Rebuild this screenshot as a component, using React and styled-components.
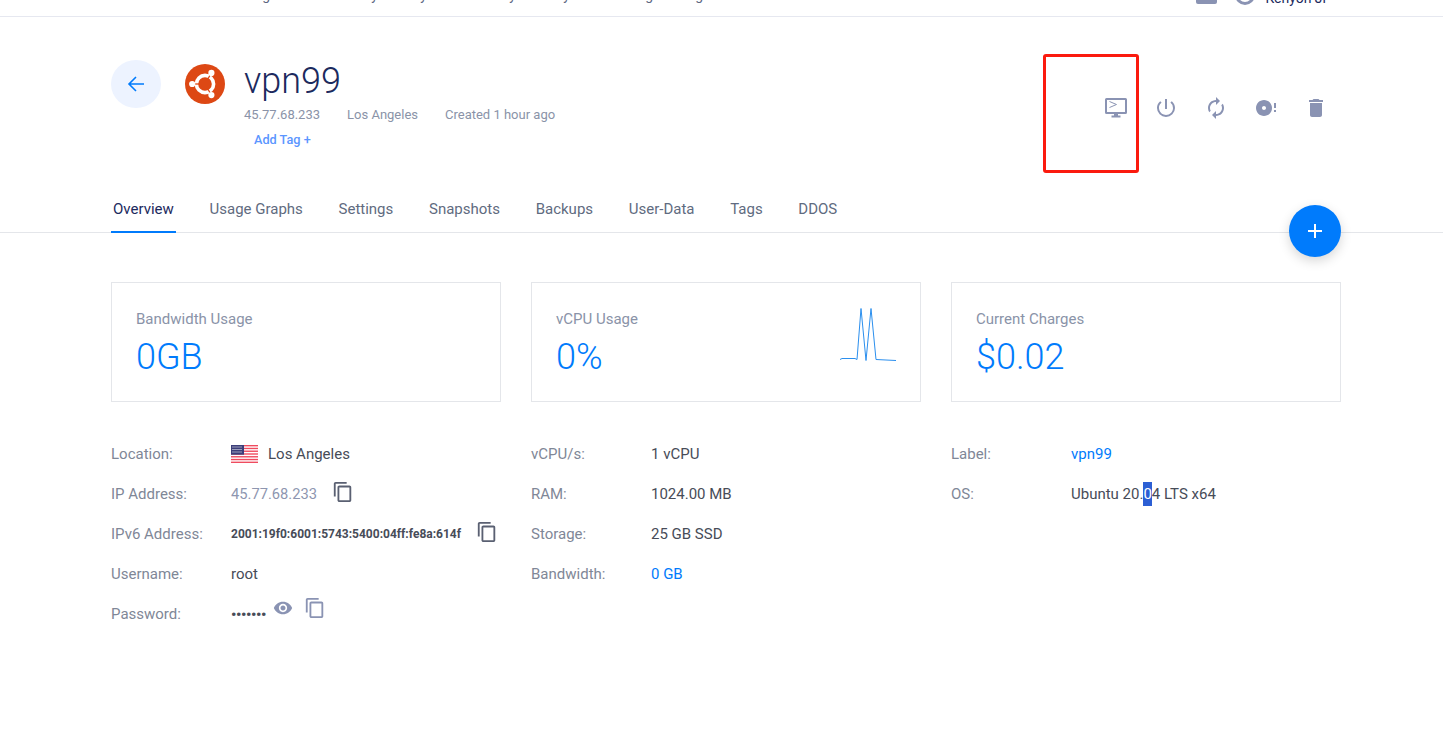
import React from 'react';
import styled, { createGlobalStyle } from 'styled-components';
import { MdContentCopy, MdVisibility, MdDelete, MdPowerSettingsNew, MdAutorenew, MdDiscFull, MdAdd } from 'react-icons/md';

const GlobalStyle = createGlobalStyle`
  html, body {
    margin: 0;
    padding: 0;
    background: #fff;
    font-family: Roboto, "Liberation Sans", sans-serif;
  }
`;

const ICON = '#8a93b3';

const Page = styled.div`
  width: 100%;
  height: 752px;
  overflow: hidden;
`;

/* page is scrolled: only the bottom of the top bar is still visible */
const TopBar = styled.div`
  height: 16px;
  border-bottom: 1px solid #e6e8f0;
  display: flex;
  align-items: flex-end;
  overflow: hidden;
`;

const TopInner = styled.div`
  height: 32px;
  margin-bottom: 13px;
  flex: none;
  width: 100%;
  display: flex;
  align-items: flex-end;
  font-size: 14px;
  line-height: 16px;
  color: #1c2a5e;
`;

const NavWord = styled.span`
  flex: none;
  width: ${({ $w }) => $w}px;
  text-align: right;
  white-space: nowrap;
  color: #5c6580;
`;

const TopRight = styled.div`
  margin-left: auto;
  margin-right: 117px;
  display: flex;
  align-items: flex-end;
`;

const MailBlock = styled.span`
  width: 21px;
  height: 18px;
  margin-bottom: -1px;
  margin-right: 18px;
  background: ${ICON};
  border-radius: 2px;
`;

const Avatar = styled.span`
  width: 20px;
  height: 20px;
  margin-bottom: -2px;
  margin-right: 10px;
  box-sizing: border-box;
  border: 3px solid ${ICON};
  border-radius: 50%;
`;

const UserName = styled.span`
  font-size: 14px;
  color: #1c2a5e;
  line-height: 16px;
  margin-bottom: -3px;
`;

const Header = styled.div`
  display: flex;
  justify-content: space-between;
  align-items: flex-start;
  padding: 43px 102px 0 111px;
  height: 128px;
`;

const HeaderLeft = styled.div`
  display: flex;
  align-items: flex-start;
`;

const BackButton = styled.div`
  width: 50px;
  height: 48px;
  border-radius: 50%;
  background: #edf3ff;
  display: flex;
  align-items: center;
  justify-content: center;
  margin-right: 24px;
`;

const Logo = styled.svg`
  width: 40px;
  height: 40px;
  margin-top: 4px;
  margin-right: 19px;
`;

const Title = styled.h1`
  margin: 0;
  font-size: 36px;
  font-weight: 300;
  line-height: 42px;
  color: #1c2a5e;
`;

const MetaRow = styled.div`
  display: flex;
  gap: 27px;
  margin-top: 4px;
  font-size: 13px;
  line-height: 18px;
  color: #8a93a8;
`;

const AddTag = styled.a`
  display: block;
  margin: 8px 0 0 10px;
  font-size: 12.7px;
  font-weight: 500;
  line-height: 16px;
  color: #5b96ff;
`;

const Actions = styled.div`
  display: flex;
  margin-top: 23px;
`;

const ActionButton = styled.div`
  width: 50px;
  height: 50px;
  display: flex;
  align-items: center;
  justify-content: center;
  color: ${ICON};
  font-size: 24px;
`;

const Annotation = styled.div`
  position: absolute;
  left: 1043px;
  top: 54px;
  width: 96px;
  height: 119px;
  box-sizing: border-box;
  border: 3px solid #fb1a0e;
  border-radius: 3px;
`;

const TabBar = styled.div`
  position: relative;
  display: flex;
  gap: 31.7px;
  height: 45px;
  box-sizing: border-box;
  padding-left: 111px;
  border-bottom: 1px solid #e4e6ea;
`;

const Tab = styled.div`
  height: 45px;
  box-sizing: border-box;
  padding: 12px 2px 0;
  font-size: 15px;
  line-height: 18px;
  color: ${({ $active }) => ($active ? '#1c2a5e' : '#5f6b80')};
  border-bottom: 2px solid ${({ $active }) => ($active ? '#007bfc' : 'transparent')};
`;

const Fab = styled.div`
  position: absolute;
  right: 102px;
  top: 17px;
  width: 52px;
  height: 52px;
  border-radius: 50%;
  background: #007bfc;
  color: #fff;
  font-size: 24px;
  display: flex;
  align-items: center;
  justify-content: center;
  box-shadow: 0 4px 12px rgba(0, 0, 0, 0.16);
`;

const Content = styled.div`
  width: 1230px;
  margin: 49px 0 0 111px;
`;

const Cards = styled.div`
  display: grid;
  grid-template-columns: repeat(3, 390px);
  gap: 30px;
`;

const Card = styled.div`
  height: 120px;
  box-sizing: border-box;
  border: 1px solid #e4e6ea;
  padding: 26px 24px 0;
  display: flex;
  justify-content: space-between;
  align-items: flex-start;
`;

const CardLabel = styled.div`
  font-size: 15px;
  line-height: 20px;
  color: #8a93a8;
`;

const CardValue = styled.div`
  margin-top: 6px;
  font-size: 36px;
  font-weight: 300;
  line-height: 44px;
  color: #007bfc;
`;

const Spark = styled.svg`
  width: 58px;
  height: 54px;
  margin-top: -2px;
  margin-right: -1px;
`;

const Details = styled.div`
  display: grid;
  grid-template-columns: repeat(3, 390px);
  gap: 30px;
  margin-top: 32px;
`;

const Row = styled.div`
  height: 40px;
  display: flex;
  align-items: center;
  font-size: 15px;
`;

const Label = styled.div`
  flex: none;
  width: 120px;
  color: #7f8797;
`;

const Value = styled.div`
  display: flex;
  align-items: center;
  color: ${({ $color }) => $color || '#474c58'};
  font-size: ${({ $size }) => $size || 15}px;
  font-weight: ${({ $weight }) => $weight || 400};
  white-space: pre;
`;

const Flag = styled.svg`
  width: 27px;
  height: 18px;
  margin-right: 10px;
`;

const Selected = styled.span`
  display: inline-block;
  line-height: 24px;
  background: #2c5fd4;
  color: #fff;
`;

const CopyIcon = styled(MdContentCopy)`
  flex: none;
  font-size: 22px;
  margin-left: ${({ $gap }) => $gap}px;
  margin-bottom: ${({ $lift }) => $lift || 4}px;
  color: ${({ $color }) => $color || '#5a6072'};
`;

const EyeIcon = styled(MdVisibility)`
  flex: none;
  font-size: 20px;
  margin-left: 7px;
  margin-bottom: 12px;
  color: ${ICON};
`;

const Dots = styled.span`
  font-size: 15px;
  font-weight: 700;
  letter-spacing: -0.4px;
  margin-top: 2px;
  color: #474c58;
`;

const UbuntuLogo = () => (
  <Logo viewBox="0 0 40 40">
    <circle cx="20" cy="20" r="20" fill="#dd4814" />
    <circle cx="20" cy="20" r="8.6" fill="none" stroke="#fff" strokeWidth="3.6" />
    <g stroke="#dd4814" strokeWidth="1.3">
      <line x1="14" y1="20" x2="5" y2="20" />
      <line x1="23" y1="14.8" x2="27.5" y2="7" />
      <line x1="23" y1="25.2" x2="27.5" y2="33" />
    </g>
    <circle cx="7.2" cy="20" r="3.1" fill="#fff" />
    <circle cx="26.4" cy="8.9" r="3.1" fill="#fff" />
    <circle cx="26.4" cy="31.1" r="3.1" fill="#fff" />
  </Logo>
);

const ConsoleIcon = () => (
  <svg width="24" height="22" viewBox="0 0 24 22" fill="none">
    <rect x="2" y="2" width="20" height="14" rx="0.5" stroke={ICON} strokeWidth="2" />
    <path d="M5.5 4.5l7 3-7 3" stroke={ICON} strokeWidth="1" />
    <path d="M10 16h4v3h-4z M7.5 18.5h9v2h-9z" fill={ICON} />
  </svg>
);

const UsFlag = () => {
  const stripes = [0, 2, 4, 6, 8, 10, 12];
  return (
    <Flag viewBox="0 0 27 18">
      <rect width="27" height="18" fill="#fff" />
      {stripes.map((n) => (
        <rect key={n} y={(n * 18) / 13} width="27" height={18 / 13} fill="#ef4b5f" />
      ))}
      <rect width="13" height="9.7" fill="#3d3f7a" />
      <path d="M1.5 2h10M1.5 4.5h10M1.5 7h10" stroke="#fff" strokeWidth="1" strokeDasharray="1 1" />
    </Flag>
  );
};

const topWords = [
  { text: 'Billing', w: 270 },
  { text: 'Security', w: 108 },
  { text: 'Activity', w: 49 },
  { text: 'Directory', w: 89 },
  { text: 'Gateway', w: 42 },
  { text: 'Pricing', w: 95 },
  { text: 'Hosting', w: 50 },
];

const tabs = ['Overview', 'Usage Graphs', 'Settings', 'Snapshots', 'Backups', 'User-Data', 'Tags', 'DDOS'];

export default function App() {
  return (
    <Page>
      <GlobalStyle />
      <TopBar>
        <TopInner>
          {topWords.map((word) => (
            <NavWord key={word.text} $w={word.w}>{word.text}</NavWord>
          ))}
          <TopRight>
            <MailBlock />
            <Avatar />
            <UserName>Kenyon Ji</UserName>
          </TopRight>
        </TopInner>
      </TopBar>

      <Header>
        <HeaderLeft>
          <BackButton>
            <svg width="18" height="18" viewBox="0 0 18 18" fill="none">
              <path d="M17 9H2M9 2L2 9l7 7" stroke="#007bfc" strokeWidth="1.6" />
            </svg>
          </BackButton>
          <UbuntuLogo />
          <div>
            <Title>vpn99</Title>
            <MetaRow>
              <span>45.77.68.233</span>
              <span>Los Angeles</span>
              <span>Created 1 hour ago</span>
            </MetaRow>
            <AddTag>Add Tag +</AddTag>
          </div>
        </HeaderLeft>
        <Actions>
          <ActionButton><ConsoleIcon /></ActionButton>
          <ActionButton><MdPowerSettingsNew /></ActionButton>
          <ActionButton><MdAutorenew /></ActionButton>
          <ActionButton><MdDiscFull /></ActionButton>
          <ActionButton><MdDelete /></ActionButton>
        </Actions>
      </Header>
      <Annotation />

      <TabBar>
        {tabs.map((tab, i) => (
          <Tab key={tab} $active={i === 0}>{tab}</Tab>
        ))}
        <Fab><MdAdd /></Fab>
      </TabBar>

      <Content>
        <Cards>
          <Card>
            <div>
              <CardLabel>Bandwidth Usage</CardLabel>
              <CardValue>0GB</CardValue>
            </div>
          </Card>
          <Card>
            <div>
              <CardLabel>vCPU Usage</CardLabel>
              <CardValue>0%</CardValue>
            </div>
            <Spark viewBox="0 0 58 54" fill="none">
              <path
                d="M1 52.5l2-1h13l2 1 4-51 5 52 5-52 5 51 20 1"
                stroke="#2b8fee"
                strokeWidth="1"
              />
            </Spark>
          </Card>
          <Card>
            <div>
              <CardLabel>Current Charges</CardLabel>
              <CardValue>$0.02</CardValue>
            </div>
          </Card>
        </Cards>

        <Details>
          <div>
            <Row>
              <Label>Location:</Label>
              <UsFlag />
              <Value>Los Angeles</Value>
            </Row>
            <Row>
              <Label>IP Address:</Label>
              <Value $color="#8e96b0" $size={14.7}>45.77.68.233</Value>
              <CopyIcon $gap={15} />
            </Row>
            <Row>
              <Label>IPv6 Address:</Label>
              <Value $size={12} $weight={700}>2001:19f0:6001:5743:5400:04ff:fe8a:614f</Value>
              <CopyIcon $gap={15} />
            </Row>
            <Row>
              <Label>Username:</Label>
              <Value>root</Value>
            </Row>
            <Row>
              <Label>Password:</Label>
              <Dots>•••••••</Dots>
              <EyeIcon />
              <CopyIcon $gap={11} $lift={12} $color={ICON} />
            </Row>
          </div>
          <div>
            <Row>
              <Label>vCPU/s:</Label>
              <Value>1 vCPU</Value>
            </Row>
            <Row>
              <Label>RAM:</Label>
              <Value>1024.00 MB</Value>
            </Row>
            <Row>
              <Label>Storage:</Label>
              <Value>25 GB SSD</Value>
            </Row>
            <Row>
              <Label>Bandwidth:</Label>
              <Value $color="#007bfc">0 GB</Value>
            </Row>
          </div>
          <div>
            <Row>
              <Label>Label:</Label>
              <Value $color="#007bfc">vpn99</Value>
            </Row>
            <Row>
              <Label>OS:</Label>
              <Value>Ubuntu 20.<Selected>0</Selected>4 LTS x64</Value>
            </Row>
          </div>
        </Details>
      </Content>
    </Page>
  );
}
